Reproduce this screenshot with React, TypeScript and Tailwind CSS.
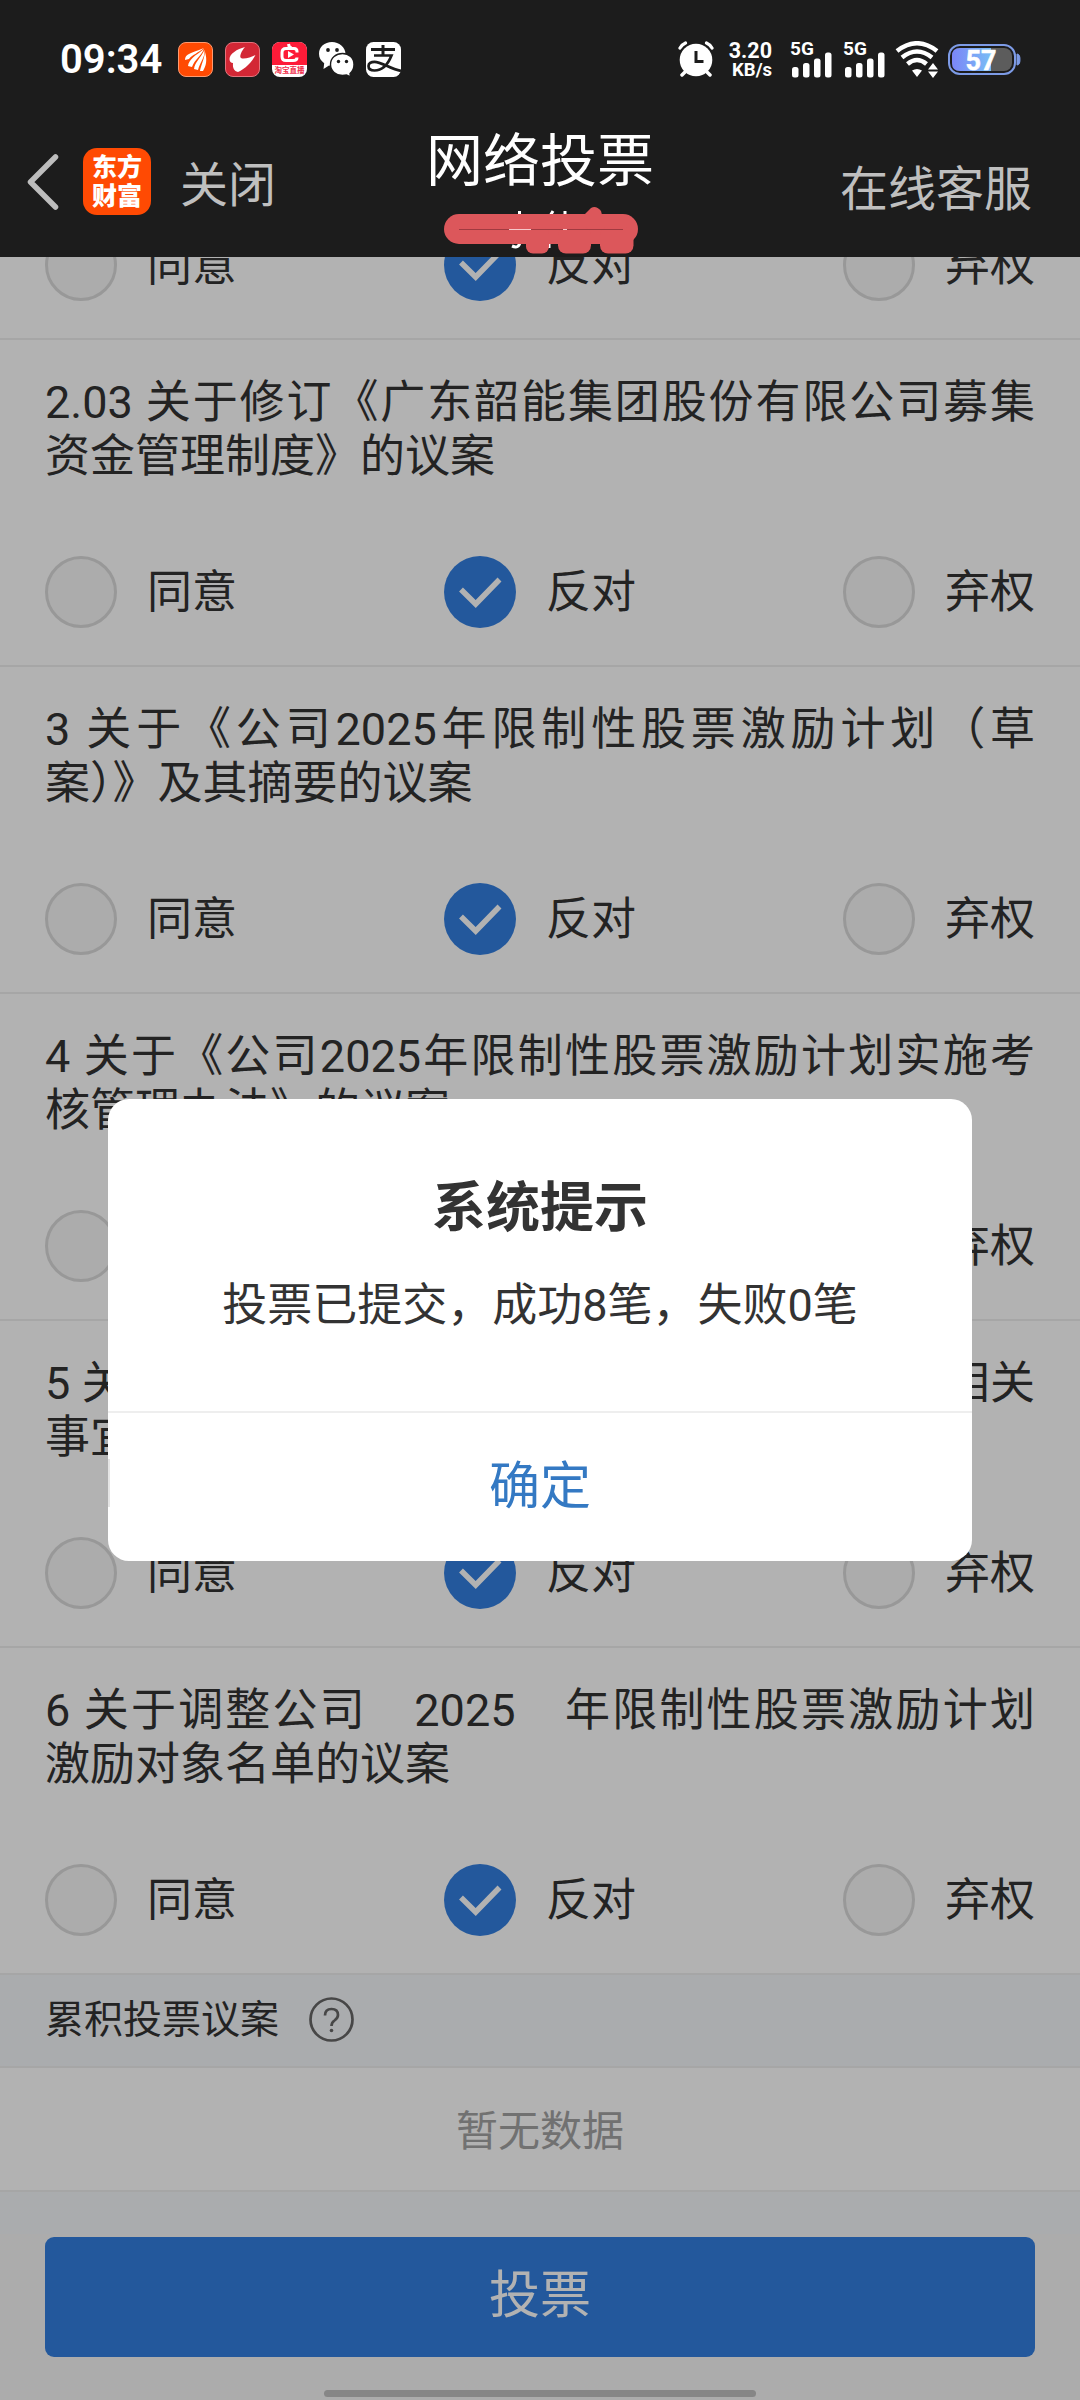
import React, { useState } from 'react'

type Choice = 'agree' | 'against' | 'abstain'

const CHOICES: { key: Choice; label: string }[] = [
  { key: 'agree', label: '同意' },
  { key: 'against', label: '反对' },
  { key: 'abstain', label: '弃权' },
]

const PROPOSALS = [
  { id: '2.03', lines: ['2.03 关于修订《广东韶能集团股份有限公司募集', '资金管理制度》的议案'] },
  { id: '3', lines: ['3 关于《公司2025年限制性股票激励计划（草', '案）》及其摘要的议案'] },
  { id: '4', lines: ['4 关于《公司2025年限制性股票激励计划实施考', '核管理办法》的议案'] },
  { id: '5', lines: ['5 关于提请股东大会授权董事会办理股权激励相关', '事宜的议案'] },
  { id: '6', lines: ['6 关于调整公司　2025　年限制性股票激励计划', '激励对象名单的议案'] },
]

function Radio({ checked }: { checked: boolean }) {
  if (!checked) return <span className="w-[72px] h-[72px] rounded-full border-[3px] border-[#dadada] bg-[#f6f6f6]" />
  return (
    <span className="w-[72px] h-[72px] rounded-full bg-[#337fe0]">
      <svg viewBox="0 0 72 72" className="w-full h-full" fill="none" stroke="#fff" strokeWidth="5.5">
        <path d="M17 33.5 L31.7 48 L55.5 23.5" />
      </svg>
    </span>
  )
}

function Options() {
  const [value, setValue] = useState<Choice>('against')
  return (
    <div className="shrink-0 flex justify-between px-[45px] pb-[37px] border-b-2 border-[#eee]">
      {CHOICES.map((c) => (
        <button key={c.key} onClick={() => setValue(c.key)} className="flex items-center gap-[30px]">
          <Radio checked={value === c.key} />
          <span className="pt-[1px] text-[45px] leading-[71px]">{c.label}</span>
        </button>
      ))}
    </div>
  )
}

function Signal() {
  return (
    <div className="w-[44px] h-[37px] flex flex-col">
      <span className="text-[19px] leading-[15px] font-bold">5G</span>
      <svg viewBox="0 0 44 26" className="w-[44px] h-[26px] -mt-[4px]" fill="#fff">
        <rect x="2" y="15" width="6.5" height="10.5" rx="2.5" />
        <rect x="13" y="11" width="6.5" height="14.5" rx="2.5" />
        <rect x="24" y="6.5" width="6.5" height="19" rx="2.5" />
        <rect x="35" y="0.5" width="6.5" height="25" rx="2.5" />
      </svg>
    </div>
  )
}

function StatusBar() {
  return (
    <div className="h-[118px] flex items-center pl-[60px] pr-[59px] text-white">
      <span className="w-[118px] text-[40px] leading-[40px] font-semibold pt-[2px]">09:34</span>

      {/* Notification icons */}
      <div className="flex gap-[12px]">
        <svg viewBox="0 0 35 35" className="w-[35px] h-[35px]">
          <rect x=".5" y=".5" width="34" height="34" rx="7.5" fill="#ff4a03" stroke="#ff9a70" />
          <path d="M7 18 C7 12 13 11 21 8 L26 6 C20 11 14 13 11 17 Z" fill="#fff" />
          <path d="M10 24 C11 17 17 14 26 7 C23 14 17 17 14 25 Z" fill="#fff" />
          <path d="M16 27 C17 20 22 17 26.5 8 C27 16 22 20 20 28 Z" fill="#fff" />
          <path d="M22 29 C23 23 26 18 27 10 C29.5 18 28 24 25 29 Z" fill="#fff" />
        </svg>
        <svg viewBox="0 0 35 35" className="w-[35px] h-[35px]">
          <rect x=".5" y=".5" width="34" height="34" rx="7.5" fill="#d32735" stroke="#e4737c" />
          <path d="M20 5 C12 7 4.500 12 4.500 17 C4.500 19.500 6 21 8 21 C7.500 26 9 29 13 30 C20 27 27 20 30.500 13 C26 15.500 18.500 17.500 16 16 C14 14.500 16.500 9 20 5 Z" fill="#fff" />
        </svg>
        <div className="w-[35px] h-[35px] rounded-[8px] overflow-hidden bg-white flex flex-col">
          <div className="h-[23px] bg-[#fd1b38]">
            <svg viewBox="0 0 35 23" className="w-[35px] h-[23px]" fill="none" stroke="#fff">
              <path d="M25 10.5 V9.5 Q25 6.5 22 6.5 H14 Q10 6.5 10 10.5 V14.5 Q10 18.5 14 18.5 H21 Q25 18.5 25 15.5" strokeWidth="3" />
              <path d="M16.5 2 Q17 6 20 6" strokeWidth="3" />
              <path d="M16 9 L22 12.5 L16 16 Z" fill="#fff" stroke="none" />
            </svg>
          </div>
          <span className="text-[7.5px] leading-[11px] text-center font-bold text-[#f0304c] whitespace-nowrap">淘宝直播</span>
        </div>
        <svg viewBox="0 0 35 35" className="w-[35px] h-[35px]">
          <path d="M13 0 C5.5 0 0 5 0 11.8 C0 16 2 19 5.2 21.2 L4.5 27 L10 23.6 L13 24 C20 24 26.5 19 26.5 12 C26.5 5 20 0 13 0 Z" fill="#fff" />
          <path d="M23.5 11.5 C17 11.5 11.5 16 11.5 22.5 C11.5 29 17 33.5 23.5 33.5 L27.5 33 L31.5 35 L31 31.5 C33.5 29.5 35 26.5 35 22.5 C35 16 30 11.5 23.5 11.5 Z" fill="#fff" stroke="#1c1c1c" strokeWidth="1.4" />
          <circle cx="9" cy="8" r="1.9" fill="#1c1c1c" />
          <circle cx="18" cy="8" r="1.9" fill="#1c1c1c" />
          <circle cx="19.5" cy="19.5" r="1.7" fill="#1c1c1c" />
          <circle cx="27.5" cy="19.5" r="1.7" fill="#1c1c1c" />
        </svg>
        <svg viewBox="0 0 35 35" className="w-[35px] h-[35px]" fill="none" stroke="#1c1c1c" strokeWidth="3">
          <rect width="35" height="35" rx="7.5" fill="#fff" stroke="none" />
          <path d="M17 3 V13 M5 7.5 H29" />
          <path d="M8 13.5 H25.5 C22.5 21 17 28.5 8.5 28.5 C4.5 28.5 2.5 26.5 2.5 24 C2.5 21.5 5 19.8 8.5 19.8 C15 19.8 24 26.5 35 29" strokeWidth="2.7" />
        </svg>
      </div>

      <div className="ml-auto flex items-center">
        <svg viewBox="0 0 36 36" className="w-[36px] h-[36px]" fill="none" stroke="#fff" strokeLinecap="round">
          <circle cx="18" cy="19" r="16.3" fill="#fff" stroke="none" />
          <path d="M2 7 Q4 3.5 7.5 2 M34 7 Q32 3.5 28.5 2" strokeWidth="3.2" />
          <path d="M7 31 L4 34 M29 31 L32 34" strokeWidth="3.5" />
          <path d="M18 10 V20.5 H25.5" stroke="#1c1c1c" strokeWidth="3" strokeLinecap="butt" />
        </svg>
        <div className="w-[60px] ml-[4px] pt-[2px] flex flex-col items-end font-bold pr-[6px] text-right">
          <span className="text-[21.5px] leading-[20px]">3.20</span>
          <span className="text-[18.5px] leading-[19px]">KB/s</span>
        </div>
        <div className="flex gap-[9px] ml-[12px]">
          <Signal />
          <Signal />
        </div>
        <svg viewBox="0 0 44 37" className="w-[44px] h-[37px] ml-[8px]" fill="none" stroke="#fff" strokeWidth="4.5">
          <path d="M2 10 Q22 -5.5 42 10" />
          <path d="M7 16.5 Q22 4.5 37 16.5" />
          <path d="M12.5 23 Q22 15 31.5 23" />
          <path d="M17 29.5 Q22 26.5 27 29.5 L22 36 Z M38 22 L43 28.5 H33 Z M38 37 L33 30.5 H43 Z" fill="#fff" stroke="none" />
        </svg>
        <svg viewBox="0 0 73 31" className="w-[73px] h-[31px] ml-[9px]">
          <defs>
            <linearGradient id="charge">
              <stop offset="0" stopColor="#7b86f7" />
              <stop offset="1" stopColor="#79bdf5" />
            </linearGradient>
          </defs>
          <rect x="1" y="1" width="66" height="29" rx="11" fill="none" stroke="#7d9be6" strokeWidth="2" />
          <path d="M69 10 Q72 10 72 15.5 Q72 21 69 21 Z" fill="#7d9be6" stroke="#7d9be6" />
          <rect x="4" y="4" width="60" height="23" rx="8" fill="#5c5c5c" />
          <path d="M43 4 H12 Q4 4 4 12 V19 Q4 27 12 27 H43 Z" fill="url(#charge)" />
          <text x="33" y="25.5" textAnchor="middle" fill="#fff" stroke="#fff" strokeWidth=".5" fontSize="27" fontWeight="700">57</text>
        </svg>
      </div>
    </div>
  )
}

// Red marker strokes over the account name
function Scribble() {
  return (
    <svg viewBox="0 0 200 50" className="w-[200px] h-[50px]">
      <path d="M79.5 4 V10 M113 4 L110 9 M125 4 V9" stroke="#fff" strokeWidth="3" />
      <path d="M72 39 Q79 42 80 35 M109 36 V41" stroke="#fff" strokeWidth="3" fill="none" />
      <g fill="#dc575b">
        <rect x="4" y="7" width="194" height="30" rx="15" />
        <rect x="86" y="20" width="23" height="26.5" rx="7" />
        <rect x="118" y="20" width="33" height="26.5" rx="8" />
        <rect x="160" y="20" width="33.5" height="26.5" rx="8" />
        <path d="M144 8 L151 1 Q156 -2 161 4 L162 8 Z" />
      </g>
      <path d="M19 22.5 H183" stroke="#a03a40" />
      <path d="M69 22.5 H91 M123 22.5 H127" stroke="#f6c8ca" />
    </svg>
  )
}

function NavBar() {
  return (
    <div className="h-[139px] flex justify-between">
      <div className="w-[360px] flex items-start pl-[27px] pt-[30px]">
        <svg viewBox="0 0 32 56" className="w-[32px] h-[56px] mt-[6px]" fill="none" stroke="#bdbdbd" strokeWidth="5.5" strokeLinecap="round" strokeLinejoin="round">
          <path d="M28.5 3 L3.5 28 L28.5 53" />
        </svg>
        <div className="w-[68px] h-[67px] ml-[24px] rounded-[14px] bg-[#ff4a03] text-white text-[25px] leading-[29px] font-black text-center pt-[5px]">
          <div>东方</div>
          <div>财富</div>
        </div>
        <span className="ml-[29px] pt-[4px] text-[48px] leading-[68px] text-[#bfbfbf]">关闭</span>
      </div>
      <div className="flex flex-col items-center">
        <h1 className="pt-[2px] text-[57px] leading-[84px] text-white">网络投票</h1>
        <div className="mt-[3px]"><Scribble /></div>
      </div>
      <div className="w-[360px] pr-[48px] pt-[38px] text-right text-[48px] leading-[68px] text-[#bfbfbf]">在线客服</div>
    </div>
  )
}

export default function App() {
  return (
    <div className="relative w-[1080px] h-[2400px] overflow-hidden flex flex-col bg-white text-[#333] font-['Roboto','Noto_Sans_CJK_SC',sans-serif]" lang="zh-CN">
      <header className="h-[257px] shrink-0 bg-[#1c1c1c]">
        <StatusBar />
        <NavBar />
      </header>

      <main className="relative flex-1 flex flex-col">
        <div className="h-[83px] flex flex-col justify-end overflow-hidden">
          <Options />
        </div>

        {PROPOSALS.map((p) => (
          <section key={p.id} className="h-[327px] flex flex-col justify-between pt-[36px]">
            <div className="px-[45px] text-[45px] leading-[54px] whitespace-nowrap">
              <div className="[text-align-last:justify]">{p.lines[0]}</div>
              <div>{p.lines[1]}</div>
            </div>
            <Options />
          </section>
        ))}

        <div className="h-[93px] flex items-center gap-[30px] px-[45px] bg-[#f4f6f9] border-b-2 border-[#eee]">
          <span className="text-[39px]">累积投票议案</span>
          <svg viewBox="0 0 45 45" className="w-[45px] h-[45px] -mt-[2px]" fill="none" stroke="#666" strokeWidth="2.7">
            <circle cx="22.5" cy="22.5" r="21" />
            <path d="M16 18.5 Q16 12 22.5 12 Q29 12 29 18 Q29 21 25.5 23.5 Q22.5 25.5 22.5 29" />
            <circle cx="22.5" cy="33.5" r="1.8" fill="#666" stroke="none" />
          </svg>
        </div>
        <div className="h-[124px] pt-[4px] flex items-center justify-center border-b-2 border-[#eee] text-[42px] text-[#a3a3a3]">暂无数据</div>

        <footer className="flex-1 flex flex-col bg-[#f7f7f7]">
          <div className="h-[42px] bg-[#f4f6f9]" />
          <div className="px-[45px] pt-[3px]">
            <button className="w-full h-[120px] pb-[2px] rounded-[9px] bg-[#337fe0] text-white text-[51px]">投票</button>
          </div>
        </footer>

        {/* Modal */}
        <div className="absolute inset-0 bg-black/30">
          <div className="mt-[842px] mx-auto w-[864px] h-[462px] rounded-[21px] bg-white flex flex-col text-center">
            <div className="h-[314px] pt-[68px] border-b-2 border-[#eee]">
              <h2 className="text-[54px] leading-[84px] font-bold">系统提示</h2>
              <p className="mt-[22px] text-[45px] leading-[66px]">投票已提交，成功8笔，失败0笔</p>
            </div>
            <div className="flex-1 flex">
              <span className="w-[2px] h-[48px] mt-[46px] -mr-[2px] bg-[#e5e5e5]" />
              <button className="flex-1 text-[51px] text-[#3479c3]">确定</button>
            </div>
          </div>
        </div>

        <div className="absolute bottom-[3px] left-[324px] w-[432px] h-[7px] rounded-full bg-[#868686]" />
      </main>
    </div>
  )
}
